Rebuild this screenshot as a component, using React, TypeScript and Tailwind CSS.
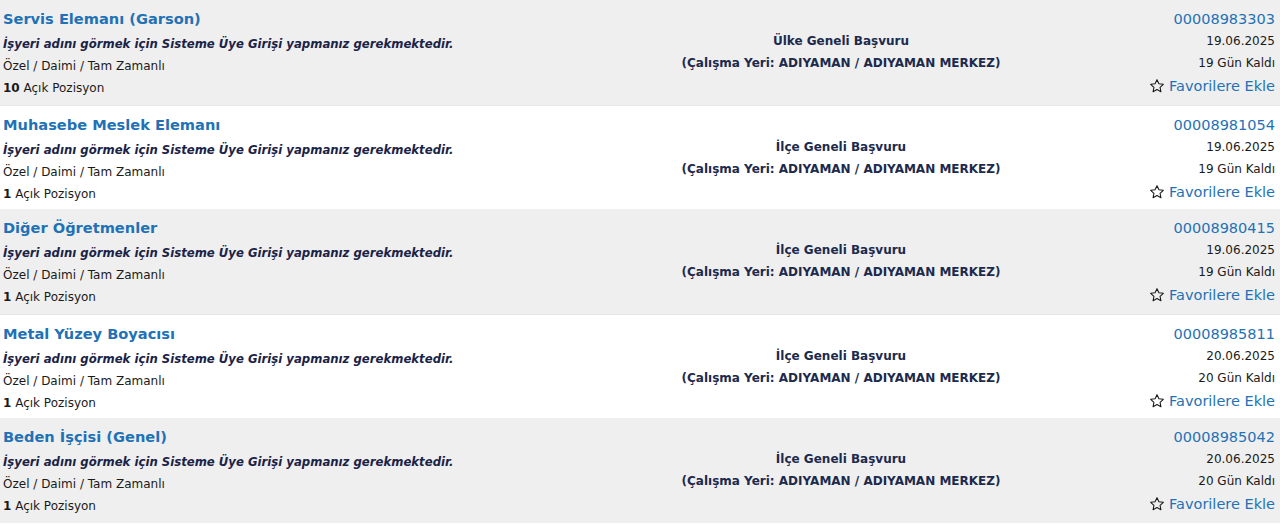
import React from 'react';

const jobs = [
  { title: 'Servis Elemanı (Garson)', count: '10', scope: 'Ülke Geneli Başvuru', no: '00008983303', date: '19.06.2025', left: '19 Gün Kaldı' },
  { title: 'Muhasebe Meslek Elemanı', count: '1', scope: 'İlçe Geneli Başvuru', no: '00008981054', date: '19.06.2025', left: '19 Gün Kaldı' },
  { title: 'Diğer Öğretmenler', count: '1', scope: 'İlçe Geneli Başvuru', no: '00008980415', date: '19.06.2025', left: '19 Gün Kaldı' },
  { title: 'Metal Yüzey Boyacısı', count: '1', scope: 'İlçe Geneli Başvuru', no: '00008985811', date: '20.06.2025', left: '20 Gün Kaldı' },
  { title: 'Beden İşçisi (Genel)', count: '1', scope: 'İlçe Geneli Başvuru', no: '00008985042', date: '20.06.2025', left: '20 Gün Kaldı' },
];

const StarIcon = () => (
  <svg width="16" height="16" viewBox="0 0 24 24" fill="none" stroke="#1a1a1a" strokeWidth="1.6" strokeLinejoin="round">
    <path d="M12 2.5l2.9 6.1 6.6.8-4.9 4.6 1.3 6.6L12 17.3l-5.9 3.3 1.3-6.6-4.9-4.6 6.6-.8z" />
  </svg>
);

const App: React.FC = () => {
  return (
    <div className="w-[1280px] h-[524px] bg-white font-['DejaVu_Sans',Verdana,sans-serif]">
      {jobs.map((job, i) => (
        <div
          key={i}
          className={`grid grid-cols-[602px_478px_1fr] h-[104.5px] ${i % 2 === 0 ? 'bg-[#efefef]' : 'bg-white border-t border-[#e6e6e6]'}`}
        >
          <div className="pl-[3px] pt-[5px]">
            <div className="text-[14.6px] font-bold leading-[28px] text-[#1f72b6]">{job.title}</div>
            <div className="text-[11.7px] font-bold italic leading-[22px] text-[#1a2346]">
              İşyeri adını görmek için Sisteme Üye Girişi yapmanız gerekmektedir.
            </div>
            <div className="text-[12px] leading-[22px] text-[#1a1a1a]">Özel / Daimi / Tam Zamanlı</div>
            <div className="text-[12px] leading-[22px] text-[#1a1a1a]">
              <span className="font-bold">{job.count}</span> Açık Pozisyon
            </div>
          </div>
          <div className="flex flex-col items-center pt-[30px] text-[12px] font-bold leading-[22px] text-[#1c2a4d]">
            <div>{job.scope}</div>
            <div>(Çalışma Yeri: ADIYAMAN / ADIYAMAN MERKEZ)</div>
          </div>
          <div className="flex flex-col items-end pr-[5px] pt-[8px] leading-[22px]">
            <div className="text-[14.5px] text-[#1f72b6]">{job.no}</div>
            <div className="text-[12px] text-[#1a1a1a]">{job.date}</div>
            <div className="text-[12px] text-[#1a1a1a]">{job.left}</div>
            <div className="flex items-center gap-[4px] pt-[1px] text-[14.5px] text-[#1f72b6]">
              <StarIcon />
              <span>Favorilere Ekle</span>
            </div>
          </div>
        </div>
      ))}
    </div>
  );
};

export default App;
